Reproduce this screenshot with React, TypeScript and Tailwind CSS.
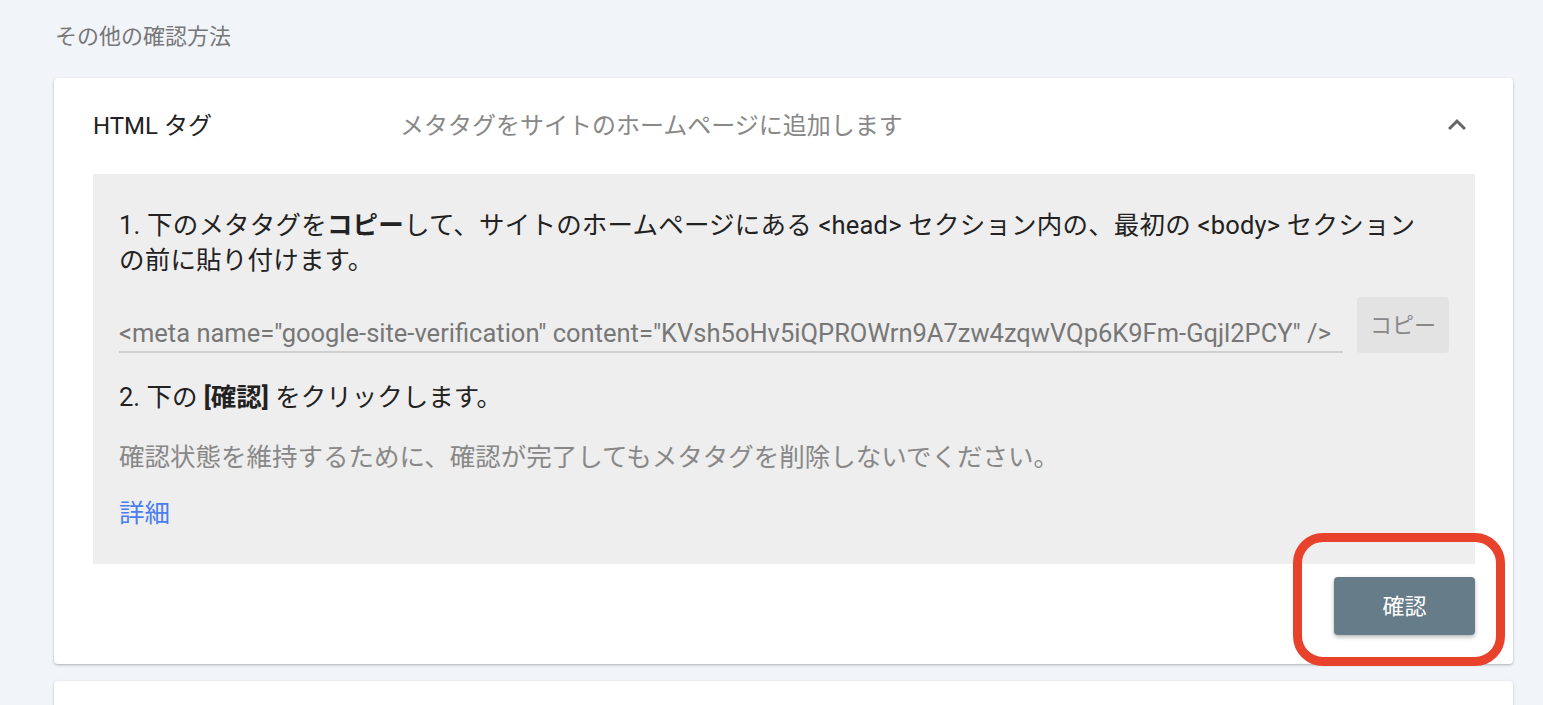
import React from "react";

const font = { fontFamily: "Roboto, 'Noto Sans CJK JP', sans-serif" };

export default function App() {
  return (
    <div
      className="h-[705px] w-full bg-[#f1f4f9] pl-[54px] pr-[30px] pt-[21px] overflow-hidden"
      style={font}
    >
      <div className="text-[22px] leading-[32px] text-[#777777] pl-[1px]">その他の確認方法</div>

      <div className="mt-[25px] bg-white rounded-[4px] shadow-[0_1px_3px_rgba(0,0,0,0.22),0_1px_2px_rgba(0,0,0,0.08)]">
        <div className="h-[96px] flex items-center pl-[39px] pr-[38px]">
          <div className="w-[307px] text-[24px] text-[#222222]">HTML タグ</div>
          <div className="flex-1 text-[24px] text-[#888888]">メタタグをサイトのホームページに追加します</div>
          <svg width="36" height="36" viewBox="0 0 24 24" className="-mt-[2px]">
            <path d="M12 8l-6 6 1.41 1.41L12 10.83l4.59 4.58L18 14z" fill="#666666" />
          </svg>
        </div>

        <div className="ml-[39px] mr-[38px] bg-[#eeeeee] px-[26px] pt-[34px] pb-[33px] text-[25.5px] leading-[35px] text-[#222222]">
          <p className="pr-[24px] tracking-[0.2px]">
            1. 下のメタタグを<b className="font-bold">コピー</b>して、サイトのホームページにある &lt;head&gt; セクション内の、最初の &lt;body&gt; セクションの前に貼り付けます。
          </p>
          <div className="mt-[19px] flex items-center gap-[14px]">
            <div className="flex-1 min-w-0 h-[56px] flex items-end">
              <div className="w-full border-b-2 border-[#cfcfcf] text-[#777777] leading-[34px] pb-[1px] whitespace-nowrap overflow-hidden">
                &lt;meta name="google-site-verification" content="KVsh5oHv5iQPROWrn9A7zw4zqwVQp6K9Fm-Gqjl2PCY" /&gt;
              </div>
            </div>
            <div className="w-[92px] h-[56px] rounded-[4px] bg-[#e3e3e3] flex items-center justify-center text-[22px] text-[#888888]">
              コピー
            </div>
          </div>
          <p className="mt-[27px]">
            2. 下の <b className="font-bold">[確認]</b> をクリックします。
          </p>
          <p className="mt-[25px] text-[#888888]">確認状態を維持するために、確認が完了してもメタタグを削除しないでください。</p>
          <p className="mt-[21px] text-[#4a7df0]">詳細</p>
        </div>

        <div className="flex justify-end pr-[38px] pt-[13px] pb-[29px]">
          <div className="relative">
            <div className="w-[141px] h-[58px] rounded-[4px] bg-[#667c89] text-white text-[22px] flex items-center justify-center shadow-[0_2px_4px_rgba(0,0,0,0.3)]">
              確認
            </div>
            <span className="absolute -left-[41px] -top-[44px] w-[212px] h-[133px] rounded-[30px] border-[9px] border-[#e8412c]" />
          </div>
        </div>
      </div>

      <div className="mt-[17px] h-[60px] bg-white rounded-t-[4px] shadow-[0_1px_3px_rgba(0,0,0,0.22)]" />
    </div>
  );
}
